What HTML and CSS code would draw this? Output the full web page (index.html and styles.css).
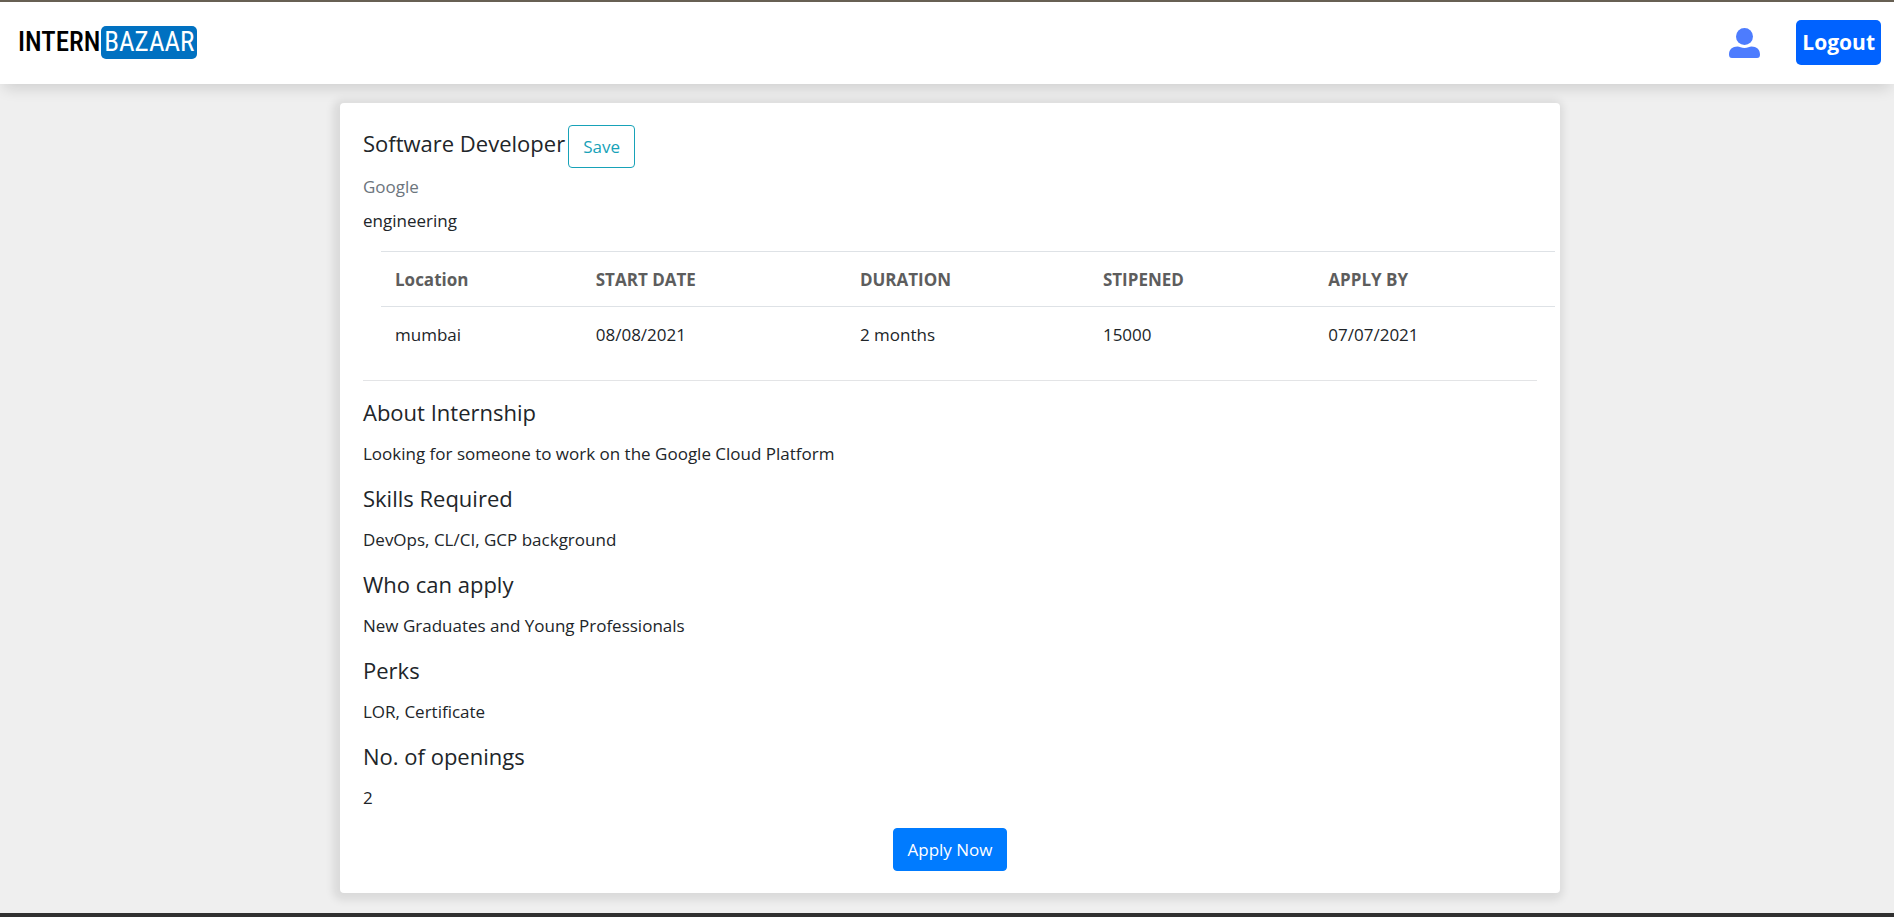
FILE: index.html
```html
<!DOCTYPE html>
<html lang="en">
<head>
<meta charset="utf-8">
<title>InternBazaar - Software Developer</title>
<link rel="stylesheet" href="styles.css">
</head>
<body>
<header class="navbar">
  <a class="brand" href="#"><span class="brand-first">INTERN</span><span class="brand-second">BAZAAR</span></a>
  <nav class="nav-actions">
    <a class="profile" href="#" aria-label="Profile">
      <svg width="31" height="30" viewBox="0 0 31 30" fill="#4d7cfe"><circle cx="15.500" cy="8.500" r="8.500"/><path d="M8.500 18.600C10.500 18.600 12.500 20 15.500 20S20.500 18.600 22.500 18.600C27.500 18.600 31 21.500 31 26.500Q31 30 28 30H3Q0 30 0 26.500C0 21.500 3.500 18.600 8.500 18.600Z"/></svg>
    </a>
    <button class="logout" type="button">Logout</button>
  </nav>
</header>
<main class="page">
  <article class="card">
    <div class="title-row">
      <h1 class="heading">Software Developer</h1>
      <button class="btn btn-outline" type="button">Save</button>
    </div>
    <p class="company">Google</p>
    <p class="category">engineering</p>
    <table class="details">
      <thead>
        <tr><th class="col-location">Location</th><th class="col-start">START DATE</th><th class="col-duration">DURATION</th><th class="col-stipend">STIPENED</th><th>APPLY BY</th></tr>
      </thead>
      <tbody>
        <tr><td>mumbai</td><td>08/08/2021</td><td>2 months</td><td>15000</td><td>07/07/2021</td></tr>
      </tbody>
    </table>
    <hr class="divider">
    <div class="sections">
      <section class="section"><h2 class="heading">About Internship</h2><p>Looking for someone to work on the Google Cloud Platform</p></section>
      <section class="section"><h2 class="heading">Skills Required</h2><p>DevOps, CL/CI, GCP background</p></section>
      <section class="section"><h2 class="heading">Who can apply</h2><p>New Graduates and Young Professionals</p></section>
      <section class="section"><h2 class="heading">Perks</h2><p>LOR, Certificate</p></section>
      <section class="section"><h2 class="heading">No. of openings</h2><p>2</p></section>
    </div>
    <div class="apply-row"><button class="btn btn-primary" type="button">Apply Now</button></div>
  </article>
</main>
<footer class="footer"></footer>
</body>
</html>
```
FILE: styles.css
```css
* { box-sizing: border-box; }

body {
  margin: 0;
  min-height: 100vh;
  display: flex;
  flex-direction: column;
  background: #efefef;
  color: #212529;
  font-family: "Segoe UI", "Open Sans", "Noto Sans", sans-serif;
  font-size: 17px;
  line-height: 26px;
}

h1, h2, p { margin: 0; }

.navbar {
  display: flex;
  align-items: center;
  justify-content: space-between;
  padding: 18px 13px 19px 18px;
  border-top: 2px solid #676053;
  background: #fff;
  box-shadow: 0 8px 14px -4px rgba(0, 0, 0, 0.14);
}

.brand {
  display: flex;
  align-items: center;
  gap: 1px;
  color: #000;
  font-family: "Roboto Condensed", "Liberation Sans Narrow", Roboto, sans-serif;
  font-size: 27px;
  font-weight: 500;
  line-height: 33px;
  text-decoration: none;
}

.brand-second {
  padding: 0 3px;
  border-radius: 5px;
  background: #0071c1;
  color: #fff;
  font-weight: 400;
}

.nav-actions { display: flex; align-items: center; gap: 36px; }

.profile, .profile svg { display: block; }

.logout {
  padding: 8px 6px;
  border: 0;
  border-radius: 5px;
  background: #0062ff;
  color: #fff;
  font: bold 21px/29px "Segoe UI", "Open Sans", "Noto Sans", sans-serif;
}

.page { flex: 1; padding: 19px 16px 19px 22px; }

.card {
  max-width: 1220px;
  margin: 0 auto;
  padding: 22px 23px;
  border-radius: 4px;
  background: #fff;
  box-shadow: -2px 2px 8px 5px rgba(0, 0, 0, 0.09);
}

.title-row { display: flex; align-items: center; gap: 3px; }

.heading { font-size: 22px; font-weight: 400; line-height: 26px; }

.title-row .heading { padding-bottom: 8px; }

.btn {
  padding: 8px 14px;
  border: 1px solid;
  border-radius: 4px;
  font: inherit;
  line-height: 25px;
}

.btn-outline { border-color: #17a2b8; background: transparent; color: #17a2b8; }
.btn-primary { border-color: #007bff; background: #007bff; color: #fff; }

.company { margin-top: 6px; color: #6c757d; }
.category { margin-top: 8px; }

.details {
  width: 100%;
  margin: 17px 0 0 18px;
  border-collapse: separate;
  border-spacing: 0;
  table-layout: fixed;
}

.details th, .details td {
  padding: 15px 14px 13px;
  border-top: 1px solid #dee2e6;
  text-align: left;
}

.details th { color: #5d5d5d; font-weight: 700; }

.col-location { width: 17.1%; }
.col-start { width: 22.5%; }
.col-duration { width: 20.7%; }
.col-stipend { width: 19.2%; }

.divider {
  height: 1px;
  margin: 19px 0 18px;
  border: 0;
  background: #e3e4e6;
}

.sections { display: grid; gap: 18px; }
.section { display: grid; gap: 16px; }

.apply-row { display: flex; justify-content: center; margin-top: 17px; }

.footer { height: 4px; background: #303030; }
```
